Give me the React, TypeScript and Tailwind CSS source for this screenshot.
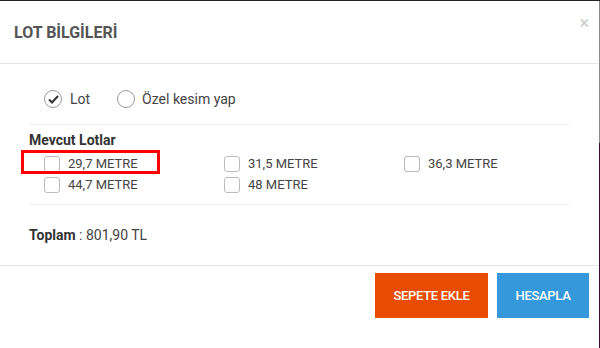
import { useState } from "react";

const lots = ["29,7 METRE", "31,5 METRE", "36,3 METRE", "44,7 METRE", "48 METRE"];

function Box({ label, marked }: { label: string; marked?: boolean }) {
  return (
    <div className="relative flex h-[21px] items-center">
      {marked && (
        <div className="absolute left-[-23px] top-[-3px] h-[24px] w-[139px] border-[3px] border-[#ff0000]" />
      )}
      <span className="h-4 w-4 rounded-[3px] border border-[#bbb] bg-white" />
      <span className="ml-[8px] text-[13px] text-[#444]">{label}</span>
    </div>
  );
}

function Check() {
  return (
    <svg width="11" height="9" viewBox="0 0 11 9">
      <path d="M1 4.5 L4 7.5 L10 1" fill="none" stroke="#333" strokeWidth="2" />
    </svg>
  );
}

export default function App() {
  const [mode, setMode] = useState<"lot" | "ozel">("lot");

  return (
    <div className="flex h-[348px] w-[600px] flex-col bg-[#222] pt-px font-['Roboto',sans-serif]">
      <div className="flex flex-1">
        <div className="flex flex-1 flex-col bg-white">
          <div className="flex h-[63px] items-start justify-between border-b border-[#e5e5e5]">
            <h1 className="ml-[14px] mt-[20px] text-[16px] font-bold text-[#555]">LOT BİLGİLERİ</h1>
            <button className="mr-[10px] mt-[13px] text-[18px] leading-none text-[#ccc]">×</button>
          </div>

          <div className="flex flex-col pl-[29px] pr-[30px]">
            <div className="flex h-[61px] items-center border-b border-[#eee] pl-[15px] pt-[10px] text-[14px] text-[#444]">
              <button className="flex items-center" onClick={() => setMode("lot")}>
                <span className="flex h-[18px] w-[18px] items-center justify-center rounded-full border border-[#999]">
                  {mode === "lot" && <Check />}
                </span>
                <span className="ml-[8px]">Lot</span>
              </button>
              <button className="ml-[27px] flex items-center" onClick={() => setMode("ozel")}>
                <span className="flex h-[18px] w-[18px] items-center justify-center rounded-full border border-[#999]">
                  {mode === "ozel" && <Check />}
                </span>
                <span className="ml-[7px]">Özel kesim yap</span>
              </button>
            </div>

            <div className="border-b border-[#eee] pb-[9px] pt-[5px]">
              <div className="text-[14px] font-bold text-[#333]">Mevcut Lotlar</div>
              <div className="mt-[2px] grid grid-cols-[180px_180px_1fr] pl-[15px]">
                {lots.map((l, i) => (
                  <Box key={l} label={l} marked={i === 0} />
                ))}
              </div>
            </div>

            <div className="flex h-[60px] items-center text-[14px] text-[#444]">
              <span className="font-bold text-[#333]">Toplam</span>
              <span>&nbsp;: 801,90 TL</span>
            </div>
          </div>

          <div className="flex justify-end gap-[9px] border-t border-[#e5e5e5] pr-[10px] pt-[7px]">
            <button className="h-[45px] w-[113px] bg-[#e84c00] text-[13px] font-medium tracking-[-0.3px] text-white">
              SEPETE EKLE
            </button>
            <button className="h-[45px] w-[92px] bg-[#3498db] text-[13px] font-medium tracking-[-0.3px] text-white">
              HESAPLA
            </button>
          </div>
        </div>
        <div className="flex w-px flex-col">
          <div className="h-[142px] bg-[#8a8a8a]" />
          <div className="flex-1 bg-[#3d0a3a]" />
        </div>
      </div>
    </div>
  );
}
